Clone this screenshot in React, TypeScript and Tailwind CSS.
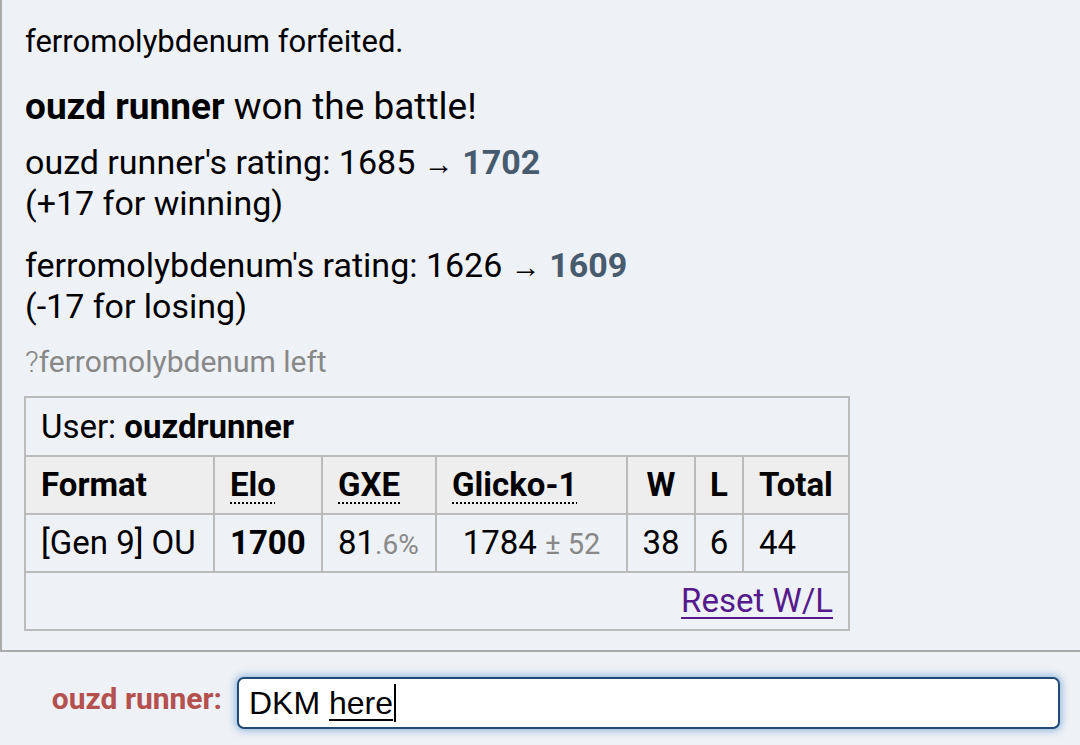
import React from "react";

const Th = ({ children, className = "" }: { children: React.ReactNode; className?: string }) => (
  <th className={`border-2 border-[#bbbbbb] bg-[#eeeeee] px-[15px] text-left font-bold ${className}`}>{children}</th>
);
const Td = ({ children, className = "" }: { children: React.ReactNode; className?: string }) => (
  <td className={`border-2 border-[#bbbbbb] px-[15px] ${className}`}>{children}</td>
);

const Arrow = () => <span className="text-[30px] leading-none">→</span>;

export default function App() {
  return (
    <div
      className="w-[1080px] h-[745px] overflow-hidden bg-[#eef1f5] text-black"
      style={{ fontFamily: "Roboto, 'Noto Sans', sans-serif" }}
    >
      <div className="h-[652px] border-l-2 border-b-2 border-[#aaaaaa] pl-[23px] pt-[21px]">
        <div className="text-[31px] leading-[41px]">ferromolybdenum forfeited.</div>
        <div className="mt-[22px] text-[37px] leading-[45px]">
          <strong className="font-bold">ouzd runner</strong> won the battle!
        </div>
        <div className="mt-[13px] text-[34px] leading-[41px]">
          ouzd runner's rating: 1685 <Arrow />{" "}
          <strong className="font-bold text-[#475b6f]">1702</strong>
          <br />
          (+17 for winning)
        </div>
        <div className="mt-[21px] text-[34px] leading-[41px]">
          ferromolybdenum's rating: 1626 <Arrow />{" "}
          <strong className="font-bold text-[#475b6f]">1609</strong>
          <br />
          (-17 for losing)
        </div>
        <div className="mt-[14px] text-[30px] leading-[41px] text-[#888888]">
          <span className="font-light">?</span>ferromolybdenum left
        </div>
        <table className="-ml-[1px] mt-[14px] w-[824px] table-fixed border-collapse border-2 border-[#bbbbbb] text-[33px]">
          <colgroup>
            <col className="w-[189px]" />
            <col className="w-[108px]" />
            <col className="w-[114px]" />
            <col className="w-[191px]" />
            <col className="w-[68px]" />
            <col className="w-[48px]" />
            <col className="w-[106px]" />
          </colgroup>
          <tbody>
            <tr className="h-[59px]">
              <td colSpan={7} className="border-2 border-[#bbbbbb] px-[15px] whitespace-nowrap">
                User: <strong className="font-bold">ouzdrunner</strong>
              </td>
            </tr>
            <tr className="h-[58px]">
              <Th>Format</Th>
              <Th>
                <span className="underline decoration-dotted decoration-2 underline-offset-[6px]">Elo</span>
              </Th>
              <Th>
                <span className="underline decoration-dotted decoration-2 underline-offset-[6px]">GXE</span>
              </Th>
              <Th>
                <span className="underline decoration-dotted decoration-2 underline-offset-[6px]">Glicko-1</span>
              </Th>
              <Th className="!px-0 !text-center">W</Th>
              <Th className="!px-0 !text-center">L</Th>
              <Th className="!px-[15px]">Total</Th>
            </tr>
            <tr className="h-[58px]">
              <Td className="whitespace-nowrap">[Gen 9] OU</Td>
              <Td className="font-bold">1700</Td>
              <Td className="whitespace-nowrap">
                81<span className="text-[28px] text-[#888888]">.6%</span>
              </Td>
              <Td className="text-center whitespace-nowrap">
                1784 <span className="text-[29px] text-[#888888]">± 52</span>
              </Td>
              <Td className="!px-0 text-center">38</Td>
              <Td className="!px-0 text-center">6</Td>
              <Td>44</Td>
            </tr>
            <tr className="h-[58px]">
              <td colSpan={7} className="border-2 border-[#bbbbbb] px-[15px] text-right">
                <span className="text-[#551a8b] underline underline-offset-[5px] decoration-2">Reset W/L</span>
              </td>
            </tr>
          </tbody>
        </table>
      </div>
      <div className="flex items-center pt-[24px]">
        <div className="mb-[8px] w-[222px] text-right text-[30px] font-bold text-[#b4504d]">ouzd runner:</div>
        <div className="ml-[15px] flex h-[52px] w-[823px] items-center rounded-[7px] border-2 border-[#224a74] bg-white px-[10px] shadow-[0_0_7px_2px_rgba(80,140,210,0.55)]">
          <span
            className="text-[32px] leading-none text-black"
            style={{ fontFamily: "'Liberation Sans', Arial, sans-serif" }}
          >
            DKM <span className="underline decoration-2 underline-offset-[5px]">here</span>
          </span>
          <span className="ml-[1px] h-[38px] w-[2px] bg-black" />
        </div>
      </div>
    </div>
  );
}
